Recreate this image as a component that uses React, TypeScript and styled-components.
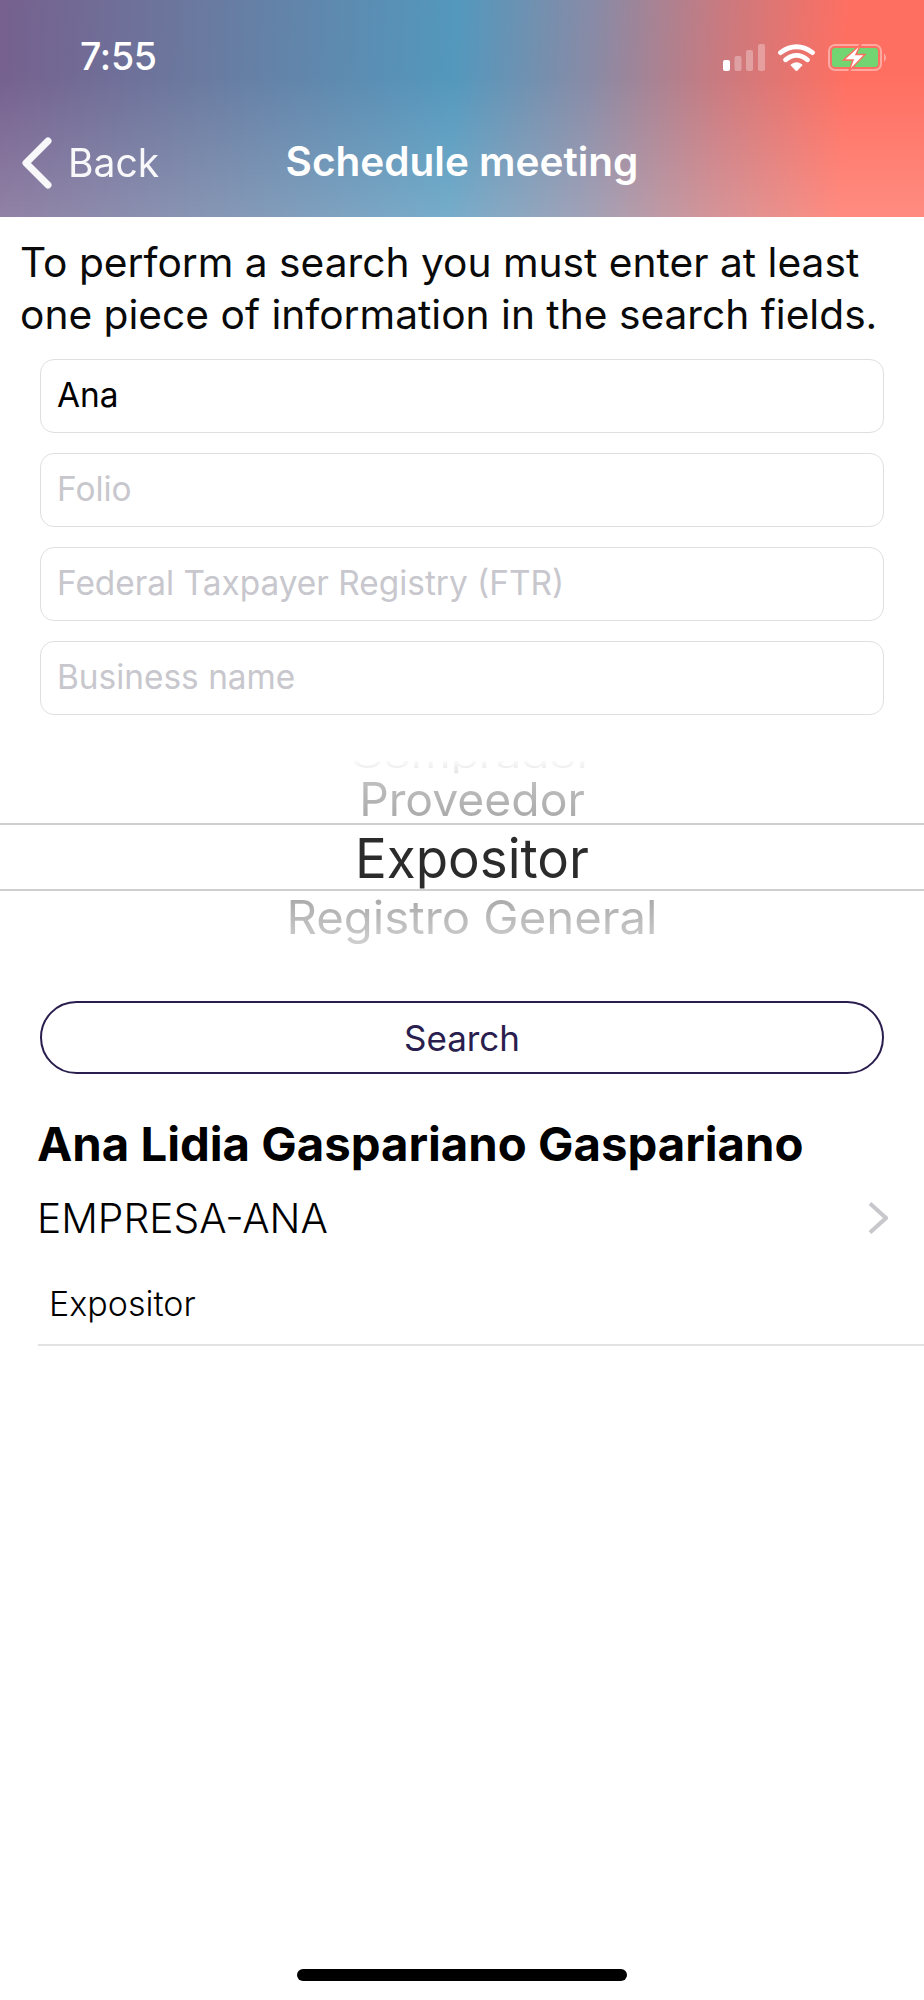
import React from "react";
import styled, { createGlobalStyle } from "styled-components";

const Global = createGlobalStyle`
  html, body { margin: 0; padding: 0; background: #fff; }
  body { font-family: "Inter", "Liberation Sans", sans-serif; -webkit-font-smoothing: antialiased; }
  * { box-sizing: border-box; }
`;

const Screen = styled.div`
  width: 924px;
  height: 2000px;
  background: #fff;
  display: flex;
  flex-direction: column;
  position: relative;
  overflow: hidden;
`;

const Header = styled.header`
  height: 217px;
  flex: none;
  color: #fff;
  background:
    linear-gradient(180deg, rgba(255,255,255,0) 35%, rgba(255,255,255,.2) 100%),
    linear-gradient(93deg, #76608e 0%, #6a7aa0 22%, #5398bd 49%, #8a8aa5 64%, #c87a80 77%, #ff6f61 91%, #ff6f61 100%);
  display: flex;
  flex-direction: column;
`;

const StatusBar = styled.div`
  height: 114px;
  padding: 0 36px 0 80px;
  display: flex;
  align-items: center;
  justify-content: space-between;
`;

const Time = styled.span`
  font-size: 37.5px;
  font-weight: 500;
  line-height: 1;
  letter-spacing: -0.3px;
`;

const StatusIcons = styled.div`
  display: flex;
  align-items: center;
  gap: 13px;
`;

const NavBar = styled.div`
  height: 103px;
  padding: 0 0 6px 22px;
  display: flex;
  align-items: center;
  position: relative;
`;

const BackLink = styled.div`
  display: flex;
  align-items: center;
  gap: 16px;
  font-size: 39px;
  font-weight: 400;
  opacity: .95;
`;

const Title = styled.div`
  position: absolute;
  left: 0;
  right: 0;
  top: 25px;
  text-align: center;
  font-size: 40.5px;
  font-weight: 600;
  line-height: 46px;
`;

const Intro = styled.p`
  margin: 20px 0 1px;
  padding: 0 20px;
  font-size: 40.7px;
  line-height: 52px;
  color: #0a0a0a;
  white-space: nowrap;
`;

const Fields = styled.div`
  margin: 17px 40px 0;
  display: flex;
  flex-direction: column;
  gap: 20px;
`;

const Field = styled.div<{ $filled?: boolean }>`
  height: 74px;
  border: 1.5px solid #dfdfe2;
  border-radius: 14px;
  padding: 0 16px 2px;
  display: flex;
  align-items: center;
  font-size: 33.4px;
  color: ${p => (p.$filled ? "#000" : "#c7c7cd")};
`;

const Picker = styled.div`
  margin-top: 46px;
  height: 186px;
  position: relative;
  overflow: hidden;
`;

const Selection = styled.div`
  position: absolute;
  left: 0;
  right: 0;
  top: 62px;
  height: 68px;
  border-top: 2px solid #cfcfcf;
  border-bottom: 2px solid #cfcfcf;
`;

const PickerItem = styled.div<{ $top: number; $size: number; $scale: number; $color: string }>`
  position: absolute;
  left: 0;
  width: 944px;
  top: ${p => p.$top}px;
  height: 66px;
  line-height: 66px;
  text-align: center;
  white-space: nowrap;
  font-size: ${p => p.$size}px;
  transform: scaleY(${p => p.$scale});
  background: ${p => p.$color};
  -webkit-background-clip: text;
  background-clip: text;
  color: transparent;
`;

const SearchButton = styled.button`
  display: block;
  margin: 54px 40px 0;
  width: 844px;
  height: 73px;
  background: #fff;
  border: 2px solid #2a1e4e;
  border-radius: 37px;
  color: #2a1e4e;
  font-family: inherit;
  font-size: 35px;
`;

const Result = styled.div`
  margin: 28px 0 0 38px;
  border-bottom: 2px solid #e2e2e2;
  height: 244px;
  display: flex;
  flex-direction: column;
`;

const Name = styled.div`
  font-size: 47.3px;
  font-weight: 700;
  line-height: 84px;
  color: #000;
  white-space: nowrap;
  margin-left: -1px;
`;

const CompanyRow = styled.div`
  display: flex;
  align-items: center;
  justify-content: space-between;
  padding-right: 36px;
  height: 64px;
  font-size: 40.7px;
  font-weight: 300;
  color: #000;
  margin-left: -1px;
`;

const Role = styled.div`
  margin-top: 34px;
  padding-left: 11px;
  font-size: 34px;
  font-weight: 300;
  line-height: 40px;
  color: #000;
`;

const HomeBar = styled.div`
  position: absolute;
  left: 297px;
  bottom: 19px;
  width: 330px;
  height: 12px;
  border-radius: 6px;
  background: #000;
`;

const Signal = () => (
  <svg width="42" height="27" viewBox="0 0 42 27">
    <rect x="0" y="16" width="7" height="11" rx="2" fill="#fff" />
    <rect x="11.500" y="12" width="7" height="15" rx="2" fill="#fff" opacity=".3" />
    <rect x="23" y="6" width="7" height="21" rx="2" fill="#fff" opacity=".3" />
    <rect x="35" y="0" width="7" height="27" rx="2" fill="#fff" opacity=".3" />
  </svg>
);

const Wifi = () => (
  <svg width="37" height="27" viewBox="0 0 37 27">
    <path d="M18.500 27 L12.800 21 Q18.500 16.500 24.200 21 Z" fill="#fff" stroke="#fff" strokeWidth="1" strokeLinejoin="round" />
    <path d="M7.500 15.800 Q18.500 7 29.500 15.800" fill="none" stroke="#fff" strokeWidth="4.800" strokeLinecap="round" />
    <path d="M2.500 8.600 Q18.500 -3 34.500 8.600" fill="none" stroke="#fff" strokeWidth="4.800" strokeLinecap="round" />
  </svg>
);

const Battery = () => (
  <svg width="60" height="27" viewBox="0 0 60 27">
    <rect x="1" y="1" width="52" height="25" rx="6" fill="none" stroke="#fff" strokeOpacity=".4" strokeWidth="2" />
    <path d="M56 9 Q60 13.500 56 18 Z" fill="#fff" fillOpacity=".4" />
    <rect x="4" y="4" width="46" height="19" rx="3" fill="#72d572" />
    <path d="M33 0 L15.500 16 H25 L21 27 L37 10.500 H28 Z" fill="#fff" stroke="#ff6f61" strokeWidth="1.500" />
  </svg>
);

const BackChevron = () => (
  <svg width="30" height="52" viewBox="0 0 30 52">
    <path d="M26 4 L4 26 L26 48" fill="none" stroke="#fff" strokeWidth="7" strokeLinecap="round" strokeLinejoin="round" />
  </svg>
);

const Disclosure = () => (
  <svg width="20" height="32" viewBox="0 0 20 32">
    <path d="M2 1.500 L18 16 L2 30.500" fill="none" stroke="#c7c7cc" strokeWidth="4" />
  </svg>
);

export default function App() {
  return (
    <Screen>
      <Global />
      <Header>
        <StatusBar>
          <Time>7:55</Time>
          <StatusIcons>
            <Signal />
            <Wifi />
            <Battery />
          </StatusIcons>
        </StatusBar>
        <NavBar>
          <BackLink>
            <BackChevron />
            Back
          </BackLink>
          <Title>Schedule meeting</Title>
        </NavBar>
      </Header>

      <Intro>
        To perform a search you must enter at least
        <br />
        one piece of information in the search fields.
      </Intro>

      <Fields>
        <Field $filled>Ana</Field>
        <Field>Folio</Field>
        <Field>Federal Taxpayer Registry (FTR)</Field>
        <Field>Business name</Field>
      </Fields>

      <Picker>
        <Selection />
        <PickerItem $top={-36} $size={45.600} $scale={0.6} $color="linear-gradient(180deg,#fff 50%,#ddd 100%)">Comprador</PickerItem>
        <PickerItem $top={5} $size={46.300} $scale={1} $color="linear-gradient(180deg,#c8c8c8,#a2a2a2)">Proveedor</PickerItem>
        <PickerItem $top={64} $size={52.900} $scale={1.04} $color="linear-gradient(180deg,#2b2b2b,#2b2b2b)">Expositor</PickerItem>
        <PickerItem $top={124} $size={47.300} $scale={0.97} $color="linear-gradient(180deg,#a0a0a0,#d4d4d4)">Registro General</PickerItem>
      </Picker>

      <SearchButton>Search</SearchButton>

      <Result>
        <Name>Ana Lidia Gaspariano Gaspariano</Name>
        <CompanyRow>
          EMPRESA-ANA
          <Disclosure />
        </CompanyRow>
        <Role>Expositor</Role>
      </Result>

      <HomeBar />
    </Screen>
  );
}
